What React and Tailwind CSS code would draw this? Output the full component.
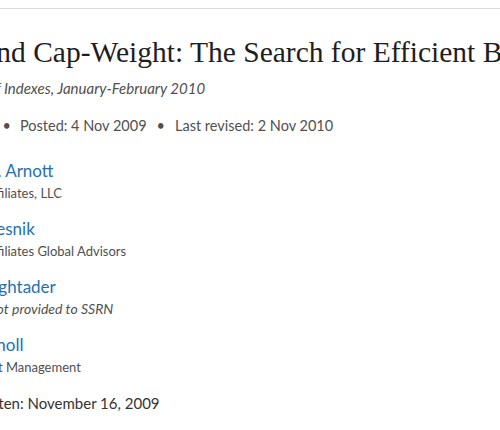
export default function App() {
  const authors = [
    { name: "Robert D. Arnott", aff: "Research Affiliates, LLC", italic: false, np: "pl-0", ap: "pl-0" },
    { name: "Vitali Kalesnik", aff: "Research Affiliates Global Advisors", italic: false, np: "pl-0", ap: "pl-0" },
    { name: "Paul Moghtader", aff: "affiliation not provided to SSRN", italic: true, np: "pl-[7px]", ap: "pl-[1px]" },
    { name: "Craig Scholl", aff: "Invesco Asset Management", italic: false, np: "pl-[6px]", ap: "-ml-[5px]" },
  ];
  return (
    <div className="w-[500px] h-[430px] overflow-hidden bg-white" style={{ fontFamily: "Lato, 'Open Sans', sans-serif" }}>
      <div className="h-[8px]" />
      <div className="h-px bg-[#dcdcdc]" />
      <div className="-ml-[70px] w-[1000px] whitespace-nowrap">
        <h1 className="mt-[25px] pl-[4px] text-[29.5px] leading-[36px] text-[#1e1e1e]" style={{ fontFamily: "'Liberation Serif', serif" }}>
          Beyond Cap-Weight: The Search for Efficient Beta
        </h1>
        <div className="mt-[8px] pl-[9px] text-[15px] leading-[20px] italic text-[#505050]">
          Journal of Indexes, January-February 2010
        </div>
        <div className="mt-[18px] pl-[6px] text-[14.5px] leading-[20px] text-[#505050] flex items-center">
          <span>10 Pages</span>
          <span className="mx-[9px]">•</span>
          <span>Posted: 4 Nov 2009</span>
          <span className="mx-[10px]">•</span>
          <span>Last revised: 2 Nov 2010</span>
        </div>
        <div className="mt-[24px] flex flex-col gap-[14px]">
          {authors.map((a) => (
            <div key={a.name}>
              <div className={"text-[17px] leading-[22px] text-[#2472ad] " + a.np}>{a.name}</div>
              <div className={"leading-[22px] text-[#505050] " + a.ap + (a.italic ? " italic text-[14px]" : " text-[13px]")}>{a.aff}</div>
            </div>
          ))}
        </div>
        <div className="mt-[14px] pl-[4px] text-[15px] leading-[22px] text-[#333]">Date Written: November 16, 2009</div>
      </div>
    </div>
  );
}
